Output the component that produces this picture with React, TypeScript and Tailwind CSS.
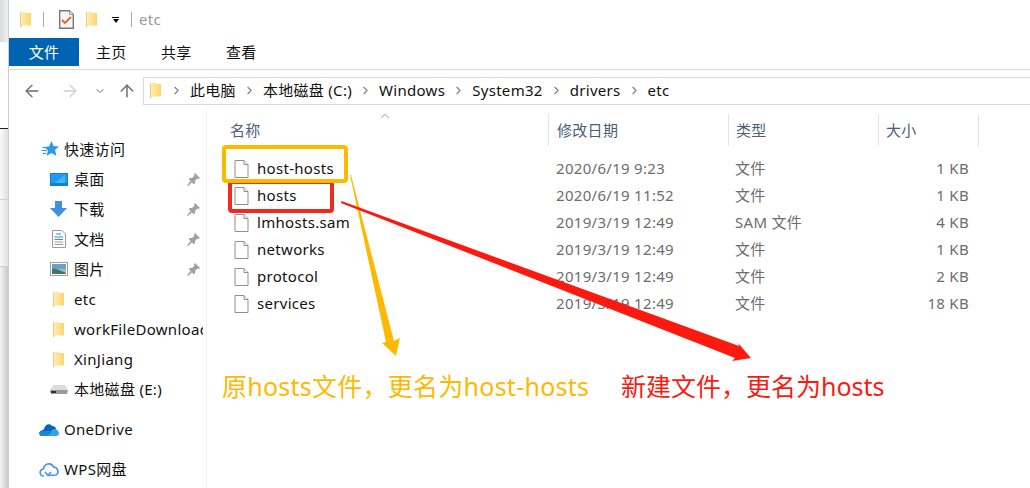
import { ArrowLeft, ArrowRight, ArrowUp, ChevronDown, ChevronRight, ChevronUp } from "lucide-react";

const FONT = `"Noto Sans", "Noto Sans CJK SC", sans-serif`;

const sideItems = [
  { label: "桌面", icon: "desktop", pinned: true },
  { label: "下载", icon: "download", pinned: true },
  { label: "文档", icon: "docs", pinned: true },
  { label: "图片", icon: "pics", pinned: true },
  { label: "etc", icon: "folder", pinned: false },
  { label: "workFileDownload", icon: "folder", pinned: false },
  { label: "XinJiang", icon: "folder", pinned: false },
  { label: "本地磁盘 (E:)", icon: "drive", pinned: false },
];

const files = [
  { name: "host-hosts", date: "2020/6/19 9:23", type: "文件", size: "1 KB" },
  { name: "hosts", date: "2020/6/19 11:52", type: "文件", size: "1 KB" },
  { name: "lmhosts.sam", date: "2019/3/19 12:49", type: "SAM 文件", size: "4 KB" },
  { name: "networks", date: "2019/3/19 12:49", type: "文件", size: "1 KB" },
  { name: "protocol", date: "2019/3/19 12:49", type: "文件", size: "2 KB" },
  { name: "services", date: "2019/3/19 12:49", type: "文件", size: "18 KB" },
];

const crumbs = ["此电脑", "本地磁盘 (C:)", "Windows", "System32", "drivers", "etc"];

function FolderIcon({ h = 17 }: { h?: number }) {
  return (
    <svg width="13" height={h} viewBox="0 0 13 17">
      <defs>
        <linearGradient id="folderFill" x1="0" x2="1" y1="0" y2="0">
          <stop offset="0" stopColor="#fdeebb" />
          <stop offset="1" stopColor="#fbd671" />
        </linearGradient>
      </defs>
      <path d="M1 1.500 L6 0.500 L7 2 L12 2 L12 14.500 L5 14.500 L1 16.500 Z" fill="url(#folderFill)" />
      <path d="M1 1.500 L1.800 1.300 L1.800 16 L1 16.500 Z" fill="#e8c678" />
    </svg>
  );
}

function FileIcon() {
  return (
    <svg width="15" height="18" viewBox="0 0 15 18" fill="none">
      <path d="M1 .5 H10 L14 4.5 V17.5 H1 Z" fill="#fff" stroke="#8f8f8f" />
      <path d="M10 .5 V4.5 H14" fill="#f0f0f0" stroke="#8f8f8f" />
    </svg>
  );
}

function ChecklistIcon() {
  return (
    <svg width="15" height="19" viewBox="0 0 15 19" fill="none">
      <path d="M.7 .7 H10.500 L14.300 4.500 V18.300 H.7 Z" fill="#f7f7f7" stroke="#777" strokeWidth="1.400" />
      <path d="M10.500 .7 V4.500 H14.300" fill="#e8e8e8" stroke="#999" />
      <path d="M3 10 L6 13 L12 7" stroke="#e8602c" strokeWidth="1.800" />
    </svg>
  );
}

function SideIcon({ kind }: { kind: string }) {
  if (kind === "desktop")
    return (
      <svg width="18" height="13" viewBox="0 0 18 13">
        <rect width="18" height="13" fill="#0f7fd6" />
        <path d="M1 1 H17 V10 H1 Z" fill="#1f9bf5" />
        <path d="M5 10 L15 2 V10 Z" fill="#45b2fa" />
      </svg>
    );
  if (kind === "download")
    return (
      <svg width="17" height="16" viewBox="0 0 17 16">
        <path d="M5 0 H12 V7 H17 L8.500 16 L0 7 H5 Z" fill="#3d8fe0" />
      </svg>
    );
  if (kind === "docs")
    return (
      <svg width="14" height="18" viewBox="0 0 14 18" fill="none" className="ml-[2px]">
        <path d="M.5 .5 H10 L13.500 4 V17.500 H.5 Z" fill="#fff" stroke="#9a9a9a" />
        <path d="M4 4 H9 M2.500 7 H11 M2.500 9.500 H11" stroke="#2f8fdc" />
        <path d="M2.500 12 H11 M2.500 14.500 H11" stroke="#9a9a9a" />
      </svg>
    );
  if (kind === "pics")
    return (
      <svg width="18" height="14" viewBox="0 0 18 14">
        <rect x=".5" y=".5" width="17" height="13" fill="#fff" stroke="#a0a0a0" />
        <rect x="2" y="2" width="14" height="5" fill="#6e9fcb" />
        <path d="M2 7 H16 V12 H2 Z" fill="#9cc0b8" />
        <path d="M2 7 C7 6 10 9 16 11 V12 H2 Z" fill="#3f7467" />
      </svg>
    );
  if (kind === "drive")
    return (
      <svg width="18" height="9" viewBox="0 0 18 9">
        <path d="M3 0 H15 L18 5 H0 Z" fill="#dcdcdc" />
        <path d="M0 5 H18 L17 9 H1 Z" fill="#9b9b9b" />
        <rect x="1" y="6" width="5" height="2" fill="#333" />
      </svg>
    );
  return (
    <div className="ml-[2px]">
      <FolderIcon />
    </div>
  );
}

function PinIcon() {
  return (
    <svg width="13" height="13" viewBox="0 0 13 13" fill="#9aa3ab">
      <path d="M8 0 L13 5 L11.500 6 L10.500 5.500 L8 8 L8 10.500 L6.500 11 L2 6.500 L2.500 5 L5 5 L7.500 2.500 L7 1.500 Z" />
      <path d="M3.500 8 L5 9.500 L1 13 L0 12.500 Z" />
    </svg>
  );
}

function StarIcon() {
  return (
    <svg width="18" height="16" viewBox="0 0 18 16" fill="#2a9be8">
      <path d="M10.500 0 L12.500 5 L18 5.500 L14 9 L15.500 15 L10.500 12 L5.500 15 L7 9.500 L3 6 L8 5.500 Z" />
      <path d="M1 6 H5 L6 7 H2 Z M0 9 H6 L6 10 H1 Z M2 12 H5.500 L5 13 H2 Z" />
    </svg>
  );
}

function CloudIcon() {
  return (
    <svg width="20" height="13" viewBox="0 0 20 13">
      <path d="M5 6 C6 1 11 0 13 3 C16 3 17 5 17 6 L9 13 H3 C0 13 -1 8 4 7 Z" fill="#0a62b8" />
      <path d="M9 13 L13 7 C15 5 19 6 20 10 C20 12 19 13 17 13 Z" fill="#2fa4e7" />
      <path d="M3 13 C0 13 -1 9 2 8 L13 8 L9 13 Z" fill="#1b84d8" />
    </svg>
  );
}

function WpsCloudIcon() {
  return (
    <svg width="20" height="15" viewBox="0 0 20 15" fill="none" stroke="#4a8fe8" strokeWidth="1.600">
      <path d="M5 14 C0 14 0 7.500 4.500 7 C5 2 12 -.5 14.500 5 C19 5 20.500 11 17 13 L10 13.500" />
      <path d="M6 10 L9 13.500 L12 10" />
    </svg>
  );
}

export default function App() {
  return (
    <div
      className="relative flex h-[488px] w-[1030px] overflow-hidden bg-white text-[15px] tracking-[0.3px] text-[#111]"
      style={{ fontFamily: FONT }}
    >
      {/* Window behind, left edge */}
      <div className="flex w-[9px] shrink-0 flex-col border-r border-[#cfcfcf]">
        <div className="h-[42px] bg-gradient-to-r from-[#d8dadc] to-[#eceeef]" />
        <div className="h-[86px] bg-white" />
        <div className="h-px bg-[#222]" />
        <div className="h-[70px] bg-gradient-to-r from-[#fafafa] to-[#e0e0e0]" />
        <div className="h-px bg-[#d0d0d0]" />
        <div className="h-[66px] bg-gradient-to-r from-[#fafafa] to-[#e0e0e0]" />
        <div className="h-px bg-[#d0d0d0]" />
        <div className="flex-1 bg-gradient-to-r from-[#f5f5f5] to-[#c9c9c9]" />
      </div>

      <div className="flex min-w-0 flex-1 flex-col">
        {/* Title bar */}
        <div className="flex h-[38px] items-center pl-[10px] pt-[1px]">
          <FolderIcon />
          <div className="ml-[11px] h-[15px] w-px bg-[#a8a8a8]" />
          <div className="ml-[15px]">
            <ChecklistIcon />
          </div>
          <div className="ml-[11px]">
            <FolderIcon />
          </div>
          <div className="ml-[14px] flex flex-col items-center gap-[1px]">
            <div className="h-px w-[7px] bg-black" />
            <div className="h-0 w-0 border-x-[3.500px] border-t-[4px] border-x-transparent border-t-black" />
          </div>
          <div className="ml-[12px] h-[15px] w-px bg-[#a8a8a8]" />
          <span className="ml-[7px] text-[15px] text-[#999]">etc</span>
        </div>

        {/* Ribbon tabs */}
        <div className="flex h-[32px] border-b border-[#d9d9d9]">
          <div className="flex h-[28px] w-[70px] items-center justify-center bg-[#0063b1] text-white">文件</div>
          <div className="flex h-[28px] w-[65px] items-center pl-[17px]">主页</div>
          <div className="flex h-[28px] w-[65px] items-center pl-[17px]">共享</div>
          <div className="flex h-[28px] w-[65px] items-center pl-[17px]">查看</div>
        </div>

        {/* Navigation and address bar */}
        <div className="flex h-[40px] items-start pt-[7px]">
          <div className="flex h-[27px] w-[134px] items-center">
            <ArrowLeft size={20} strokeWidth={1.600} className="ml-[13px] text-[#6e6e6e]" />
            <ArrowRight size={20} strokeWidth={1.600} className="ml-[18px] text-[#cfcfcf]" />
            <ChevronDown size={12} strokeWidth={2} className="ml-[14px] text-[#6e6e6e]" />
            <ArrowUp size={20} strokeWidth={1.800} className="ml-[11px] text-[#6e6e6e]" />
          </div>
          <div className="flex h-[28px] flex-1 items-center border-y border-l border-[#d9d9d9] pb-[2px] pl-[5px]">
            <div className="mr-[1px]">
              <FolderIcon />
            </div>
            {crumbs.map((c) => (
              <div key={c} className="flex items-center">
                <ChevronRight size={13} strokeWidth={2} className="mx-[7px] text-[#808080]" />
                <span className="whitespace-nowrap">{c}</span>
              </div>
            ))}
          </div>
        </div>

        <div className="flex min-h-0 flex-1">
          {/* Sidebar */}
          <div className="w-[198px] shrink-0 border-r border-[#f0f0f0] pt-[24px]">
            <div className="flex h-[30px] items-center pl-[32px]">
              <div className="w-[23px]">
                <StarIcon />
              </div>
              <span>快速访问</span>
            </div>
            {sideItems.map((item) => (
              <div key={item.label} className="flex h-[30px] items-center pl-[41px] pr-[3px]">
                <div className="flex w-[24px] shrink-0 items-center">
                  <SideIcon kind={item.icon} />
                </div>
                <span className="min-w-0 flex-1 overflow-hidden whitespace-nowrap">{item.label}</span>
                {item.pinned && (
                  <div className="mr-[3px]">
                    <PinIcon />
                  </div>
                )}
              </div>
            ))}
            <div className="mt-[10px] flex h-[30px] items-center pl-[30px]">
              <div className="w-[25px]">
                <CloudIcon />
              </div>
              <span>OneDrive</span>
            </div>
            <div className="mt-[10px] flex h-[30px] items-center pl-[30px]">
              <div className="w-[25px]">
                <WpsCloudIcon />
              </div>
              <span>WPS网盘</span>
            </div>
          </div>

          {/* File list */}
          <div className="relative min-w-0 flex-1 pt-[4px]">
            <ChevronUp size={14} strokeWidth={1.200} className="absolute left-[171px] top-[-1px] text-[#777]" />
            <div className="flex h-[32px] text-[#4c607a]">
              <div className="flex w-[341px] items-center pl-[23px]">名称</div>
              <div className="flex w-[180px] items-center border-l border-[#e5e5e5] pl-[8px]">修改日期</div>
              <div className="flex w-[150px] items-center border-l border-[#e5e5e5] pl-[7px]">类型</div>
              <div className="flex w-[101px] items-center border-x border-[#e5e5e5] pl-[7px]">大小</div>
            </div>
            <div className="pt-[9px]">
              {files.map((f) => (
                <div key={f.name} className="flex h-[27px] items-center">
                  <div className="flex w-[341px] items-center pl-[27px]">
                    <FileIcon />
                    <span className="ml-[8px]">{f.name}</span>
                  </div>
                  <div className="w-[180px] pl-[8px] text-[#6d6d6d]">{f.date}</div>
                  <div className="w-[150px] pl-[7px] text-[#6d6d6d]">{f.type}</div>
                  <div className="w-[91px] text-right text-[#6d6d6d]">{f.size}</div>
                </div>
              ))}
            </div>
          </div>
        </div>
      </div>

      {/* Annotations drawn over the screenshot */}
      <div className="absolute left-[228px] top-[180px] h-[33px] w-[106px] rounded-[4px] border-[4px] border-[#f02a1e]" />
      <div className="absolute left-[222px] top-[145px] h-[38px] w-[126px] rounded-[4px] border-[4px] border-[#fdb900]" />
      <svg className="absolute left-0 top-0" width="1030" height="488">
        <polygon
          points="350,175 351,175 394,341 400,338 396,356 382,343 386,342"
          fill="#fdb900"
        />
        <polygon
          points="341.500,201 739,346 738,343 751,358 732,361 735,358 341,203"
          fill="#fb1a10"
        />
      </svg>
      <span className="absolute left-[222px] top-[368px] whitespace-nowrap text-[25px] leading-[36px] tracking-[0.25px] text-[#fdb900]">
        原hosts文件，更名为host-hosts
      </span>
      <span className="absolute left-[621px] top-[368px] whitespace-nowrap text-[25px] leading-[36px] tracking-normal text-[#fb1a10]">
        新建文件，更名为hosts
      </span>
    </div>
  );
}
